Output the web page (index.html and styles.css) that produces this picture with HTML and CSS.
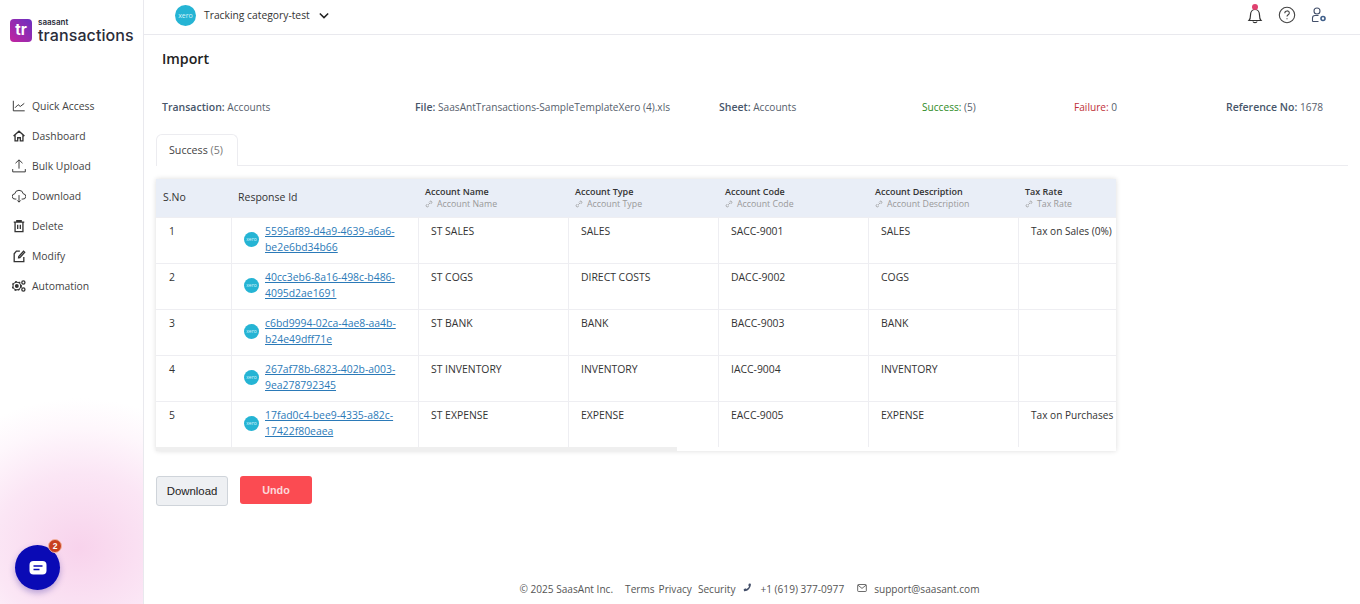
FILE: index.html
```html
<!DOCTYPE html>
<html lang="en">
<head>
    <meta charset="UTF-8">
    <meta name="viewport" content="width=device-width, initial-scale=1.0">
    <title>Import</title>
    <link rel="stylesheet" href="styles.css">
</head>
<body>
    <div class="app">
        <aside class="sidebar">
            <div class="brand">
                <div class="brand-mark">tr</div>
                <div class="brand-text">
                    <span class="brand-small">saasant</span>
                    <span class="brand-big">transactions</span>
                </div>
            </div>
            <nav class="nav">
                <a class="nav-item">
                    <svg viewBox="0 0 16 16"><path d="M1.500 2v11.500h13M3.500 10l3.500-3.500 2.500 2 4.500-3.500"/></svg>
                    Quick Access
                </a>
                <a class="nav-item">
                    <svg viewBox="0 0 16 16"><path d="M1.800 8 8 2.500 14.200 8M3.500 7v6.500h3V10h3v3.500h3V7" class="thick"/></svg>
                    Dashboard
                </a>
                <a class="nav-item">
                    <svg viewBox="0 0 16 16"><path d="M8 11V1M4 4.800 8 1l4 3.800M.8 11.500v3.200h14.400v-3.200"/></svg>
                    Bulk Upload
                </a>
                <a class="nav-item">
                    <svg viewBox="0 0 16 16"><path d="M5 11.500H3.500a3 3 0 0 1-.4-6 5 5 0 0 1 9.800 0 3 3 0 0 1-.4 6H11M8 7v8M6 13l2 2 2-2"/></svg>
                    Download
                </a>
                <a class="nav-item">
                    <svg viewBox="0 0 16 16"><path d="M2 3.500h12M5.500 3.500V2h5v1.500M3.500 3.500v11h9v-11M6.500 6.500v5M9.500 6.500v5" class="thick"/></svg>
                    Delete
                </a>
                <a class="nav-item">
                    <svg viewBox="0 0 16 16"><path d="M9 2.500H5L2.500 5.500v9h11V9M7.500 10l1.500-.2 5.500-6-1.300-1.300-5.500 6z" class="thick"/></svg>
                    Modify
                </a>
                <a class="nav-item">
                    <svg viewBox="0 0 16 16"><circle cx="5.500" cy="8" r="5" class="gear-teeth"/><circle cx="5.500" cy="8" r="3" class="gear"/><circle cx="13" cy="4" r="1.800" class="thick"/><circle cx="13" cy="12" r="1.800" class="thick"/></svg>
                    Automation
                </a>
            </nav>
            <button class="chat">
                <svg viewBox="0 0 18 16" width="18" height="16"><rect x="0.500" y="1" width="17" height="13.500" rx="4" fill="#fff"/><path d="M4.500 6h9M4.500 9.500h6" stroke="#0a0ab5" stroke-width="1.300" fill="none"/></svg>
                <span class="chat-badge">2</span>
            </button>
        </aside>

        <div class="main">
            <header class="topbar">
                <div class="org">
                    <span class="xero xero-lg">xero</span>
                    <span class="org-name">Tracking category-test</span>
                    <svg class="org-caret" viewBox="0 0 12 8" width="10" height="7"><path d="M1 1.500 6 6.500 11 1.500"/></svg>
                </div>
                <div class="top-icons">
                    <span class="bell">
                        <svg viewBox="0 0 18 20" width="18" height="20"><path d="M3 15.500c1.200-1.300 1.500-2.500 1.500-5.500 0-3 1.800-5.500 4.500-5.500s4.500 2.500 4.500 5.500c0 3 .3 4.200 1.500 5.500zM7 16.500c.3 1.500 3.700 1.500 4 0"/></svg>
                    </span>
                    <svg class="help" viewBox="0 0 18 18" width="18" height="18"><circle cx="9" cy="9" r="7.700"/><path d="M6.800 7.200c0-3 4.500-3 4.500-.2 0 1.800-2.300 1.800-2.300 3.600M9 12.200v1"/></svg>
                    <svg class="user-gear" viewBox="0 0 18 18" width="18" height="18"><circle cx="7" cy="5" r="3"/><path d="M2.500 15.500V12c0-1.500 1-2.500 2.500-2.500h3.500M2.500 15.500h6"/><circle cx="13" cy="12.500" r="2" class="user-cog"/></svg>
                </div>
            </header>

            <main class="content">
                <h1 class="page-title">Import</h1>
                <div class="meta">
                    <div><b>Transaction:</b> Accounts</div>
                    <div><b>File:</b> SaasAntTransactions-SampleTemplateXero (4).xls</div>
                    <div><b>Sheet:</b> Accounts</div>
                    <div><span class="ok">Success:</span> (5)</div>
                    <div><span class="fail">Failure:</span> 0</div>
                    <div><b>Reference No:</b> 1678</div>
                </div>

                <div class="tabs">
                    <div class="tab">Success <span class="count">(5)</span></div>
                </div>

                <div class="table-card">
                    <table class="result-table">
                        <colgroup>
                            <col class="col-no"><col class="col-id"><col class="col-std"><col class="col-std"><col class="col-std"><col class="col-std"><col class="col-tax">
                        </colgroup>
                        <thead>
                            <tr>
                                <th class="th-big">S.No</th>
                                <th class="th-big">Response Id</th>
                                <th>Account Name<small><svg viewBox="0 0 10 10"><path d="M4 6 6.500 3.500M3 5 1.800 6.200a1.400 1.400 0 0 0 2 2L5 7M5 3l1.200-1.200a1.400 1.400 0 0 1 2 2L7 5"/></svg>Account Name</small></th>
                                <th>Account Type<small><svg viewBox="0 0 10 10"><path d="M4 6 6.500 3.500M3 5 1.800 6.200a1.400 1.400 0 0 0 2 2L5 7M5 3l1.200-1.200a1.400 1.400 0 0 1 2 2L7 5"/></svg>Account Type</small></th>
                                <th>Account Code<small><svg viewBox="0 0 10 10"><path d="M4 6 6.500 3.500M3 5 1.800 6.200a1.400 1.400 0 0 0 2 2L5 7M5 3l1.200-1.200a1.400 1.400 0 0 1 2 2L7 5"/></svg>Account Code</small></th>
                                <th>Account Description<small><svg viewBox="0 0 10 10"><path d="M4 6 6.500 3.500M3 5 1.800 6.200a1.400 1.400 0 0 0 2 2L5 7M5 3l1.200-1.200a1.400 1.400 0 0 1 2 2L7 5"/></svg>Account Description</small></th>
                                <th>Tax Rate<small><svg viewBox="0 0 10 10"><path d="M4 6 6.500 3.500M3 5 1.800 6.200a1.400 1.400 0 0 0 2 2L5 7M5 3l1.200-1.200a1.400 1.400 0 0 1 2 2L7 5"/></svg>Tax Rate</small></th>
                            </tr>
                        </thead>
                        <tbody>
                            <tr>
                                <td>1</td>
                                <td><div class="resp"><span class="xero">xero</span><a>5595af89-d4a9-4639-a6a6-be2e6bd34b66</a></div></td>
                                <td>ST SALES</td><td>SALES</td><td>SACC-9001</td><td>SALES</td><td class="nowrap">Tax on Sales (0%)</td>
                            </tr>
                            <tr>
                                <td>2</td>
                                <td><div class="resp"><span class="xero">xero</span><a>40cc3eb6-8a16-498c-b486-4095d2ae1691</a></div></td>
                                <td>ST COGS</td><td>DIRECT COSTS</td><td>DACC-9002</td><td>COGS</td><td></td>
                            </tr>
                            <tr>
                                <td>3</td>
                                <td><div class="resp"><span class="xero">xero</span><a>c6bd9994-02ca-4ae8-aa4b-b24e49dff71e</a></div></td>
                                <td>ST BANK</td><td>BANK</td><td>BACC-9003</td><td>BANK</td><td></td>
                            </tr>
                            <tr>
                                <td>4</td>
                                <td><div class="resp"><span class="xero">xero</span><a>267af78b-6823-402b-a003-9ea278792345</a></div></td>
                                <td>ST INVENTORY</td><td>INVENTORY</td><td>IACC-9004</td><td>INVENTORY</td><td></td>
                            </tr>
                            <tr>
                                <td>5</td>
                                <td><div class="resp"><span class="xero">xero</span><a>17fad0c4-bee9-4335-a82c-17422f80eaea</a></div></td>
                                <td>ST EXPENSE</td><td>EXPENSE</td><td>EACC-9005</td><td>EXPENSE</td><td class="nowrap">Tax on Purchases</td>
                            </tr>
                        </tbody>
                    </table>
                    <div class="scroll-track"><div class="scroll-thumb"></div></div>
                </div>

                <div class="actions">
                    <button class="btn btn-light">Download</button>
                    <button class="btn btn-red">Undo</button>
                </div>
            </main>

            <footer class="footer">
                <span>© 2025 SaasAnt Inc.</span>
                <a class="foot-terms">Terms</a>
                <a class="foot-privacy">Privacy</a>
                <a class="foot-security">Security</a>
                <svg class="foot-phone" viewBox="0 0 12 12" width="9" height="9"><path d="M10.500 1 8 .5 7 3l1 1.200C7.500 5.800 6 7.300 4.300 8L3 7 .8 8.500 1.500 11c4.500.5 9.500-4.500 9-10z"/></svg>
                <span class="foot-tel">+1 (619) 377-0977</span>
                <svg class="foot-mail" viewBox="0 0 12 10" width="10" height="8"><rect x=".6" y=".6" width="10.800" height="8.800" rx="1"/><path d="m1 1.500 5 4 5-4"/></svg>
                <span>support@saasant.com</span>
            </footer>
        </div>
    </div>
</body>
</html>
```

FILE: styles.css
```css
* {
    box-sizing: border-box;
}
html, body {
    height: 100%;
}
body {
    margin: 0;
    background-color: #fff;
    color: #333;
    font-family: "Open Sans", "Noto Sans", sans-serif;
    font-size: 10.4px;
    overflow: hidden;
}
.app {
    display: flex;
    height: 604px;
}

/* sidebar */
.sidebar {
    position: relative;
    width: 144px;
    flex-shrink: 0;
    border-right: 1px solid #e9e9ee;
    background: radial-gradient(ellipse 170px 150px at 80px 548px, #f8d3ec 0%, #fbe6f5 50%, #fef7fc 80%, #fff 100%);
}
.brand {
    display: flex;
    align-items: center;
    gap: 6px;
    padding: 18px 0 0 10px;
}
.brand-mark {
    width: 22px;
    height: 23px;
    border-radius: 4px;
    background: linear-gradient(45deg, #c4249f, #6a30c0);
    color: #fff;
    font-family: "Inter", sans-serif;
    font-size: 15px;
    font-weight: 700;
    line-height: 22px;
    text-align: center;
}
.brand-text {
    display: flex;
    flex-direction: column;
}
.brand-small {
    font-family: "Inter", sans-serif;
    font-size: 8px;
    font-weight: 600;
    line-height: 9px;
    color: #2a2d3a;
}
.brand-big {
    font-family: "Inter", sans-serif;
    font-size: 16px;
    font-weight: 500;
    line-height: 16px;
    letter-spacing: 0.1px;
    color: #2a2d3a;
}
.nav {
    margin-top: 48px;
}
.nav-item {
    display: flex;
    align-items: center;
    gap: 6px;
    height: 30px;
    padding-left: 12px;
    color: #444;
}
.nav-item svg {
    width: 14px;
    height: 14px;
    fill: none;
    stroke: #333;
    stroke-width: 1.100;
}
.nav-item .thick {
    stroke-width: 1.500;
}
.nav-item .gear {
    fill: #333;
    stroke: #fff;
    stroke-width: 1.500;
}
.nav-item .gear-teeth {
    fill: #333;
    stroke-width: 1.600;
    stroke-dasharray: 2 2.200;
}
.chat {
    position: absolute;
    left: 15px;
    top: 545px;
    width: 45px;
    height: 45px;
    border: none;
    border-radius: 50%;
    background-color: #0a0ab5;
    box-shadow: 0 3px 6px rgba(60, 40, 160, 0.35);
    display: flex;
    align-items: center;
    justify-content: center;
}
.chat-badge {
    position: absolute;
    right: -2px;
    top: -6px;
    width: 14px;
    height: 14px;
    border-radius: 50%;
    background-color: #c8401f;
    border: 1px solid #f3b3a0;
    color: #fff;
    font-size: 8.500px;
    font-weight: 700;
    line-height: 12px;
    text-align: center;
}

/* top bar */
.main {
    flex: 1;
    display: flex;
    flex-direction: column;
    min-width: 0;
}
.topbar {
    height: 35px;
    flex-shrink: 0;
    display: flex;
    align-items: center;
    justify-content: space-between;
    padding: 0 32px 4px 31px;
    border-bottom: 1px solid #e9e9ee;
}
.org {
    display: flex;
    align-items: center;
}
.xero {
    display: inline-flex;
    align-items: center;
    justify-content: center;
    flex-shrink: 0;
    width: 15px;
    height: 15px;
    border-radius: 50%;
    background-color: #25b4d4;
    color: #d8f3fa;
    font-size: 5px;
}
.xero-lg {
    width: 21px;
    height: 21px;
    font-size: 7px;
}
.org-name {
    margin-left: 8px;
    font-size: 10.300px;
    color: #333;
}
.org-caret {
    margin-left: 9px;
    fill: none;
    stroke: #222;
    stroke-width: 1.800;
}
.top-icons {
    display: flex;
    align-items: center;
    gap: 14px;
}
.bell {
    position: relative;
    display: block;
    height: 20px;
}
.bell svg {
    fill: none;
    stroke: #333;
    stroke-width: 1.200;
}
.bell::after {
    content: "";
    position: absolute;
    left: 6px;
    top: -1px;
    width: 6px;
    height: 6px;
    border-radius: 50%;
    background-color: #e0406f;
}
.help {
    fill: none;
    stroke: #444;
    stroke-width: 1.100;
}
.user-gear {
    fill: none;
    stroke: #44506a;
    stroke-width: 1.100;
}
.user-cog {
    stroke-width: 1.600;
    stroke: #3f5f8a;
}

/* content */
.content {
    flex: 1;
    padding: 0 12px;
}
.page-title {
    margin: 14px 0 0 6px;
    font-size: 14.200px;
    font-weight: 600;
    line-height: 20px;
    color: #222;
}
.meta {
    display: grid;
    grid-template-columns: 253px 304px 203px 152px 152px auto;
    margin: 31px 0 0 6px;
    font-size: 10.150px;
    line-height: 14px;
    color: #56606c;
}
.meta b {
    font-size: 10.500px;
    font-weight: 600;
    color: #47566a;
}
.ok {
    color: #2e8b1e;
}
.fail {
    color: #c0303a;
}
.tabs {
    margin-top: 20px;
    width: 1192px;
    height: 32px;
    border-bottom: 1px solid #ececf0;
}
.tab {
    display: inline-block;
    width: 82px;
    height: 32px;
    padding: 8px 2px 0 0;
    font-size: 10.700px;
    text-align: center;
    background-color: #fff;
    border: 1px solid #ececf0;
    border-bottom: none;
    border-radius: 6px 6px 0 0;
    color: #444;
}
.count {
    color: #777;
}

/* table */
.table-card {
    position: relative;
    width: 960px;
    margin-top: 13px;
    overflow: hidden;
    box-shadow: 0 0 5px rgba(0, 0, 0, 0.14);
}
.result-table {
    width: 960px;
    table-layout: fixed;
    border-collapse: separate;
    border-spacing: 0;
}
.col-no { width: 75px; }
.col-id { width: 187px; }
.col-std { width: 150px; }
.col-tax { width: 98px; }
.result-table th {
    height: 38px;
    padding: 0 0 0 7px;
    text-align: left;
    vertical-align: middle;
    background-color: #e9eef7;
    font-size: 9px;
    font-weight: 600;
    line-height: 12px;
    color: #333;
}
.result-table th small {
    display: flex;
    align-items: center;
    font-size: 8.800px;
    font-weight: 400;
    color: #999;
}
.result-table th small svg {
    width: 8px;
    height: 8px;
    margin-right: 4px;
    fill: none;
    stroke: #999;
    stroke-width: 1;
}
.result-table .th-big {
    padding-bottom: 3px;
    font-size: 10.500px;
    font-weight: 400;
    color: #333;
}
.result-table td {
    height: 46px;
    padding: 6px 0 0 12px;
    vertical-align: top;
    border-top: 1px solid #eeeef2;
    border-left: 1px solid #eeeef2;
    line-height: 14px;
    color: #333;
}
.result-table td:first-child {
    padding-left: 13px;
    border-left: none;
}
.result-table .nowrap {
    font-size: 10.100px;
    white-space: nowrap;
}
.resp {
    display: flex;
    align-items: center;
    gap: 6px;
    margin-top: -1px;
    line-height: 16px;
}
.resp a {
    color: #2b7ab8;
    text-decoration: underline;
    width: 140px;
    word-break: break-word;
}
.scroll-track {
    height: 4px;
    background-color: #fff;
}
.scroll-thumb {
    width: 521px;
    height: 4px;
    background-color: #efefef;
}

/* buttons */
.actions {
    display: flex;
    gap: 12px;
    margin-top: 25px;
}
.btn {
    width: 72px;
    height: 30px;
    border-radius: 3px;
    font-family: "Liberation Sans", sans-serif;
    font-size: 11.400px;
}
.btn-light {
    background-color: #eef0f3;
    border: 1px solid #cfd4da;
    color: #222;
}
.btn-red {
    height: 28px;
    background-color: #fb4b52;
    border: none;
    font-size: 10.800px;
    color: #fbd8da;
    font-weight: 700;
}

/* footer */
.footer {
    display: flex;
    align-items: center;
    justify-content: center;
    gap: 7px;
    height: 30px;
    padding-right: 5px;
    font-size: 10.100px;
    color: #555;
}
.foot-terms {
    margin-left: 5px;
}
.foot-privacy {
    margin-left: -3px;
}
.foot-security {
    margin-left: -1px;
}
.foot-phone {
    margin: 0 0 3px 1px;
    fill: #44506a;
}
.foot-tel {
    margin-left: 1px;
    margin-right: 6px;
}
.foot-mail {
    margin-bottom: 3px;
    fill: none;
    stroke: #444;
    stroke-width: 1;
}
```
